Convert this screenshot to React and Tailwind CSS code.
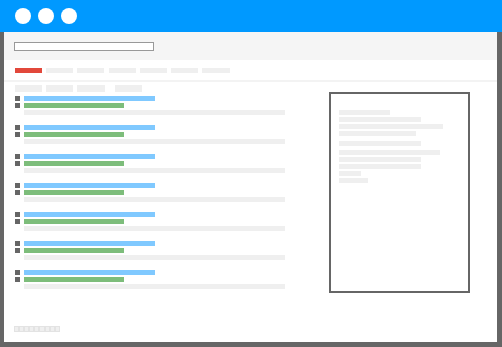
import React from "react";

const tabs = [27, 27, 27, 27, 27, 27, 28];

function Row() {
  return (
    <div className="flex flex-col gap-[2px]">
      <div className="flex items-center">
        <div className="w-[5px] h-[5px] bg-[#666]" />
        <div className="ml-[4px] w-[131px] h-[5px] bg-[#80c9ff]" />
      </div>
      <div className="flex items-center">
        <div className="w-[5px] h-[5px] bg-[#666]" />
        <div className="ml-[4px] w-[100px] h-[5px] bg-[#7dbd7b]" />
      </div>
      <div className="ml-[9px] w-[261px] h-[5px] bg-[#efefef]" />
    </div>
  );
}

function L({ w, mt = "" }) {
  return <div className={`h-[5px] bg-[#efefef] ${mt}`} style={{ width: w }} />;
}

export default function App() {
  return (
    <div className="w-[502px] h-[347px] bg-[#666] flex flex-col overflow-hidden">
      <div className="h-[32px] bg-[#0099ff] flex items-center pl-[15px] gap-[7px] shrink-0">
        <div className="w-[16px] h-[16px] rounded-full bg-white" />
        <div className="w-[16px] h-[16px] rounded-full bg-white" />
        <div className="w-[16px] h-[16px] rounded-full bg-white" />
      </div>
      <div className="flex-1 ml-[4px] mr-[5px] mb-[5px] bg-white flex flex-col">
        <div className="h-[28px] bg-[#f5f5f5] pl-[10px] pt-[10px] shrink-0">
          <div className="w-[140px] h-[9px] border border-[#999] bg-white" />
        </div>
        <div className="flex pl-[11px] mt-[8px] gap-[4.2px]">
          {tabs.map((w, i) => (
            <div
              key={i}
              className={`h-[5px] ${i === 0 ? "bg-[#e2483b]" : "bg-[#efefef]"}`}
              style={{ width: w }}
            />
          ))}
        </div>
        <div className="mt-[7px] h-[2px] bg-[#f3f3f3]" />
        <div className="flex">
          <div className="flex flex-col pl-[11px]">
            <div className="flex mt-[3px]">
              <div className="w-[27px] h-[7px] bg-[#efefef]" />
              <div className="ml-[4px] w-[27px] h-[7px] bg-[#efefef]" />
              <div className="ml-[4px] w-[28px] h-[7px] bg-[#efefef]" />
              <div className="ml-[10px] w-[27px] h-[7px] bg-[#efefef]" />
            </div>
            <div className="flex flex-col gap-[10px] mt-[4px]">
              {[0, 1, 2, 3, 4, 5, 6].map((i) => (
                <Row key={i} />
              ))}
            </div>
          </div>
          <div className="ml-[44px] mt-[10px] w-[141px] h-[201px] border-2 border-[#666] bg-white pl-[8px] pt-[15.5px] flex flex-col">
            <L w={51} />
            <L w={82} mt="mt-[2.3px]" />
            <L w={104} mt="mt-[2.3px]" />
            <L w={77} mt="mt-[2.3px]" />
            <L w={82} mt="mt-[4.7px]" />
            <L w={101} mt="mt-[4px]" />
            <L w={82} mt="mt-[2px]" />
            <L w={82} mt="mt-[2.3px]" />
            <L w={22} mt="mt-[2px]" />
            <L w={29} mt="mt-[2px]" />
          </div>
        </div>
        <div className="mt-auto mb-[10px] ml-[10px] flex">
          {[0, 1, 2, 3, 4, 5, 6, 7, 8].map((i) => (
            <div key={i} className="w-[5.1px] h-[6px] bg-[#efefef] border border-[#e3e3e3]" />
          ))}
        </div>
      </div>
    </div>
  );
}
